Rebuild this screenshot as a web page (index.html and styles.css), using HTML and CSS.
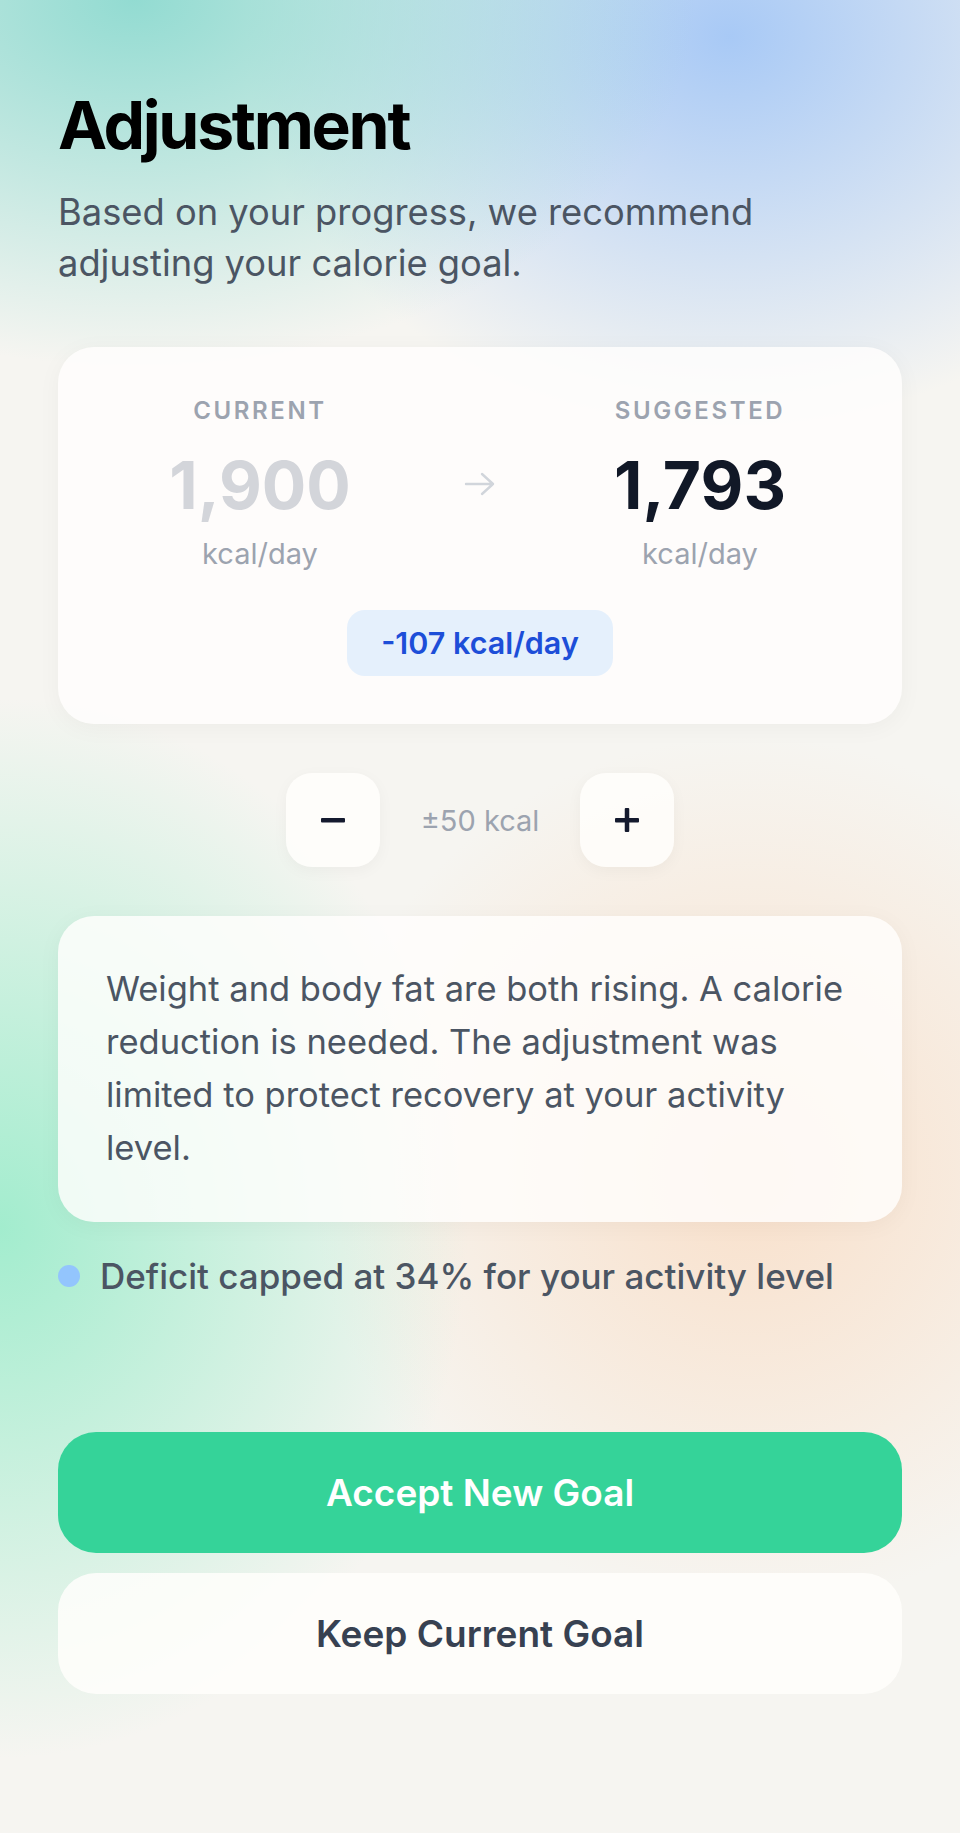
FILE: index.html
```html
<!DOCTYPE html>
<html lang="en">
<head>
  <meta charset="UTF-8" />
  <meta name="viewport" content="width=device-width, initial-scale=1" />
  <title>Adjustment</title>
  <link rel="stylesheet" href="styles.css">
</head>
<body>

<main class="screen">
  <h1>Adjustment</h1>
  <p class="subtitle">Based on your progress, we recommend adjusting your calorie goal.</p>

  <section class="compare-card">
    <div class="compare-row">
      <div class="goal">
        <div class="goal-label">CURRENT</div>
        <div class="goal-value old">1,900</div>
        <div class="goal-unit">kcal/day</div>
      </div>
      <svg class="arrow" width="34" height="26" viewBox="0 0 34 26" fill="none" stroke="#d1d5db" stroke-width="2.4" stroke-linecap="round" stroke-linejoin="round">
        <path d="M3 13h27M19 3l11 10-11 10" />
      </svg>
      <div class="goal">
        <div class="goal-label">SUGGESTED</div>
        <div class="goal-value">1,793</div>
        <div class="goal-unit">kcal/day</div>
      </div>
    </div>
    <div class="diff-badge">-107 kcal/day</div>
  </section>

  <div class="stepper">
    <button type="button" class="step-btn" aria-label="Decrease">
      <svg width="26" height="26" viewBox="0 0 26 26"><rect x="1" y="11" width="24" height="4.5" rx="1" fill="#141a2e" /></svg>
    </button>
    <span class="step-text">±50 kcal</span>
    <button type="button" class="step-btn" aria-label="Increase">
      <svg width="26" height="26" viewBox="0 0 26 26"><rect x="1" y="11" width="24" height="4.5" rx="1" fill="#141a2e" /><rect x="10.75" y="1" width="4.5" height="24" rx="1" fill="#141a2e" /></svg>
    </button>
  </div>

  <section class="reason-card">
    <p>Weight and body fat are both rising. A calorie reduction is needed. The adjustment was limited to protect recovery at your activity level.</p>
  </section>

  <div class="note">
    <span class="dot"></span>
    <span>Deficit capped at 34% for your activity level</span>
  </div>

  <div class="actions">
    <button type="button" class="btn-primary">Accept New Goal</button>
    <button type="button" class="btn-secondary">Keep Current Goal</button>
  </div>
</main>

</body>
</html>
```

FILE: styles.css
```css
html, body {
  margin: 0;
  padding: 0;
}
body {
  font-family: Inter, "Noto Sans", sans-serif;
  min-height: 1833px;
  background:
    radial-gradient(ellipse 720px 470px at 14% 0%, rgba(138, 217, 207, 0.92), rgba(138, 217, 207, 0) 78%),
    radial-gradient(ellipse 620px 500px at 76% 2%, rgba(164, 199, 246, 0.95), rgba(164, 199, 246, 0) 78%),
    radial-gradient(ellipse 600px 680px at 0% 67%, rgba(158, 236, 204, 0.95), rgba(158, 236, 204, 0) 78%),
    radial-gradient(ellipse 560px 560px at 78% 64%, rgba(250, 216, 188, 0.72), rgba(250, 216, 188, 0) 78%),
    #f6f5f1;
  color: #111827;
}
.screen {
  padding: 86px 58px 80px;
}
h1 {
  font-size: 66px;
  font-weight: 700;
  letter-spacing: -2.3px;
  line-height: 1.2;
  margin: 0;
  color: #000;
}
.subtitle {
  font-size: 36.3px;
  line-height: 51px;
  color: #4b5563;
  margin: 22px 0 0;
}
.compare-card, .reason-card {
  background: rgba(255, 254, 252, 0.82);
  border-radius: 36px;
  box-shadow: 0 4px 24px rgba(0, 0, 0, 0.04);
}
.compare-card {
  margin-top: 58px;
  padding: 49px 40px 48px;
  display: flex;
  flex-direction: column;
  align-items: center;
}
.compare-row {
  display: flex;
  align-items: center;
  justify-content: center;
  width: 100%;
}
.goal {
  width: 280px;
  text-align: center;
}
.goal-label {
  font-size: 24px;
  line-height: 30px;
  font-weight: 600;
  letter-spacing: 2.6px;
  color: #9ca3af;
}
.goal-value {
  font-size: 66px;
  font-weight: 700;
  line-height: 79px;
  margin-top: 20px;
  color: #111827;
}
.goal-value.old {
  color: #d3d5da;
}
.goal-unit {
  font-size: 29px;
  line-height: 36px;
  color: #9ca3af;
  margin-top: 11px;
}
.arrow {
  margin: 0 63px;
  flex-shrink: 0;
}
.diff-badge {
  margin-top: 38px;
  background: #e5f0fc;
  color: #1d4ed8;
  font-size: 30.5px;
  font-weight: 600;
  line-height: 66px;
  padding: 0 34px;
  border-radius: 18px;
}
.stepper {
  display: flex;
  align-items: center;
  justify-content: center;
  gap: 41px;
  margin-top: 49px;
}
.step-btn {
  width: 94px;
  height: 94px;
  border: none;
  border-radius: 26px;
  background: rgba(255, 254, 252, 0.85);
  box-shadow: 0 4px 16px rgba(0, 0, 0, 0.04);
  display: flex;
  align-items: center;
  justify-content: center;
  padding: 0;
}
.step-text {
  font-size: 29px;
  color: #9ca3af;
}
.reason-card {
  margin-top: 49px;
  padding: 46px 48px 48px;
}
.reason-card p {
  margin: 0;
  font-size: 34.5px;
  line-height: 53px;
  color: #4b5563;
}
.note {
  display: flex;
  align-items: center;
  gap: 20px;
  margin-top: 32px;
  font-size: 35px;
  line-height: 44px;
  font-weight: 500;
  color: #4b5563;
}
.dot {
  width: 22px;
  height: 22px;
  border-radius: 50%;
  background: #93c5fd;
  flex-shrink: 0;
}
.actions {
  margin-top: 134px;
  display: flex;
  flex-direction: column;
  gap: 20px;
}
.btn-primary, .btn-secondary {
  height: 121px;
  border: none;
  border-radius: 38px;
  font-family: inherit;
  font-size: 37px;
  font-weight: 600;
  width: 100%;
}
.btn-primary {
  background: #35d399;
  color: #fff;
}
.btn-secondary {
  background: rgba(255, 254, 252, 0.85);
  color: #374151;
}
```
